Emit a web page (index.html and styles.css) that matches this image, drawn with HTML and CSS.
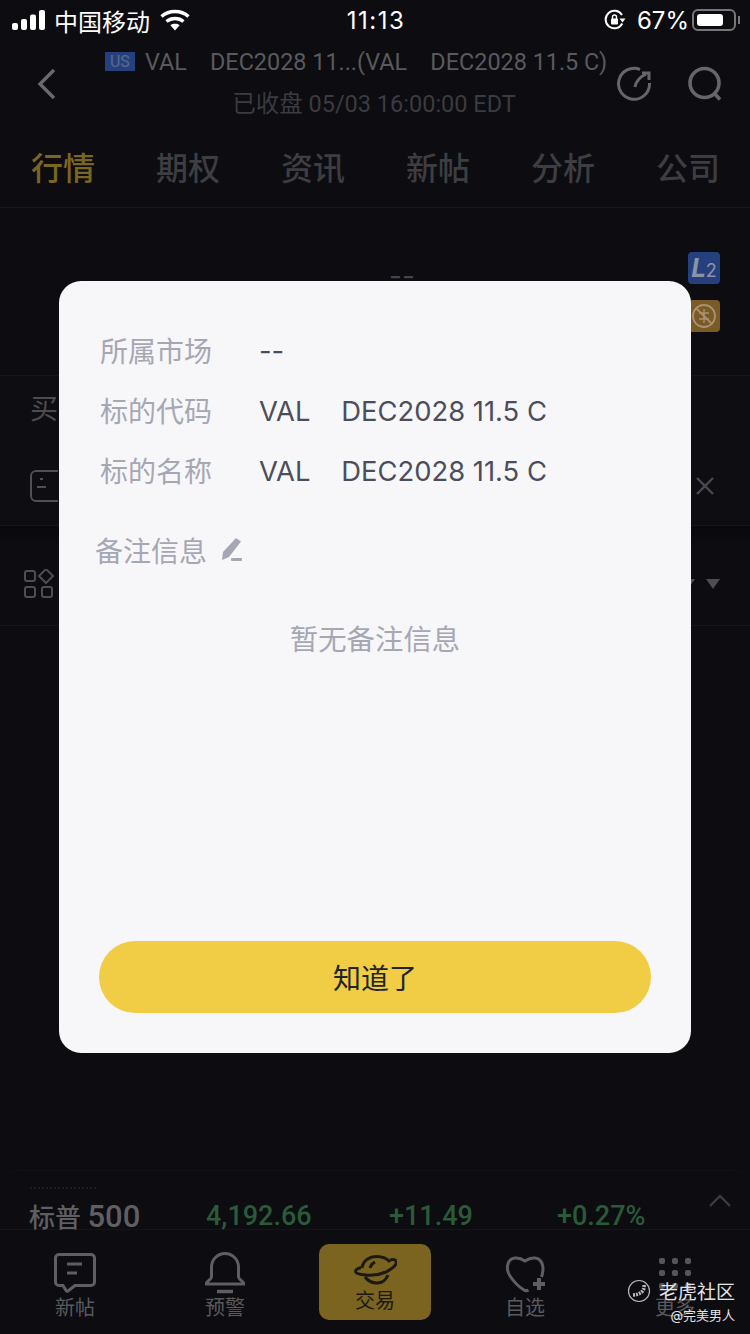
FILE: index.html
```html
<!DOCTYPE html>
<html lang="zh-CN">
<head>
    <meta charset="UTF-8">
    <meta name="viewport" content="width=device-width, initial-scale=1.0">
    <title>VAL DEC2028 11.5 C</title>
    <link rel="stylesheet" href="styles.css">
</head>
<body>
    <div class="page">
        <div class="status">
            <div class="status-left">
                <svg class="signal" width="34" height="20" viewBox="0 0 34 20" fill="#fff">
                    <rect x="0" y="13" width="6" height="7" rx="2"/>
                    <rect x="9" y="9" width="6" height="11" rx="2"/>
                    <rect x="18" y="4.5" width="6" height="15.5" rx="2"/>
                    <rect x="27" y="0" width="6" height="20" rx="2"/>
                </svg>
                <span class="carrier">中国移动</span>
                <svg width="30" height="22" viewBox="0 0 30 22" fill="none" stroke="#fff" stroke-width="3.4">
                    <path d="M1.5 7.5C9 .8 21 .8 28.5 7.5"/>
                    <path d="M6.5 12.5c4.800-4 12.200-4 17 0"/>
                    <path d="M15 21.500l-4.600-5.300c2.700-1.800 6.500-1.800 9.200 0z" fill="#fff" stroke="none"/>
                </svg>
            </div>
            <div class="status-time">11:13</div>
            <div class="status-right">
                <svg width="22" height="22" viewBox="0 0 22 22" fill="none" stroke="#fff" stroke-width="2">
                    <path d="M18.300 14.500A8.800 8.800 0 1 1 18 6"/>
                    <path d="M15.500 9.500h6l-3 4z" fill="#fff" stroke="none"/>
                    <rect x="7" y="9.500" width="7" height="6" rx="1" fill="#fff" stroke="none"/>
                    <path d="M8.500 10V8a2 2 0 0 1 4 0v2" stroke-width="1.400"/>
                </svg>
                <span class="battery-pct">67%</span>
                <div class="battery"><div class="battery-fill"></div></div>
                <div class="battery-cap"></div>
            </div>
        </div>

        <div class="header">
            <svg class="back" width="22" height="32" viewBox="0 0 22 32" fill="none" stroke="#6a6a6e" stroke-width="3.400">
                <path d="M18 2L4 16l14 14"/>
            </svg>
            <div class="title-wrap">
                <div class="title"><span class="us-tag">US</span>VAL&nbsp;&nbsp;&nbsp;&nbsp;DEC2028 11...(VAL&nbsp;&nbsp;&nbsp;&nbsp;DEC2028 11.5 C)</div>
                <div class="subtitle">已收盘 05/03 16:00:00 EDT</div>
            </div>
            <div class="header-icons">
                <svg width="36" height="36" viewBox="0 0 36 36" fill="none" stroke="#66666a" stroke-width="3">
                    <path d="M24 3.500A15.500 15.500 0 1 0 33.500 17"/>
                    <path d="M19 21c1-6 5-10 11-13"/>
                    <path d="M26 7h7v7"/>
                </svg>
                <svg width="36" height="36" viewBox="0 0 36 36" fill="none" stroke="#66666a" stroke-width="3.600">
                    <circle cx="17.500" cy="17" r="14.500"/>
                    <path d="M27 27l6 6.500"/>
                </svg>
            </div>
        </div>

        <div class="tabs">
            <span class="tab tab-active">行情</span>
            <span class="tab">期权</span>
            <span class="tab">资讯</span>
            <span class="tab">新帖</span>
            <span class="tab">分析</span>
            <span class="tab">公司</span>
        </div>

        <div class="quote">
            <div class="quote-price">--</div>
            <div class="quote-badges">
                <div class="badge badge-blue"><i>L</i><span>2</span></div>
                <div class="badge badge-orange">
                    <svg width="26" height="26" viewBox="0 0 26 26" fill="none" stroke="#a99273" stroke-width="1.800">
                        <circle cx="13" cy="13" r="11"/>
                        <path d="M5 5l16 16"/>
                        <path d="M8 10h10M8 16h10M13 6v14" stroke-width="1.400"/>
                    </svg>
                </div>
            </div>
        </div>

        <div class="buy-row">
            <div class="buy-label">买</div>
            <div class="notice">
                <svg width="28" height="32" viewBox="0 0 28 32" fill="none" stroke="#505054" stroke-width="2">
                    <rect x="1" y="1" width="40" height="30" rx="5"/>
                    <path d="M10 9h3M7 17h9"/>
                </svg>
                <svg class="close" width="18" height="18" viewBox="0 0 18 18" stroke="#4a4a52" stroke-width="2.400">
                    <path d="M1 1l16 16M17 1L1 17"/>
                </svg>
            </div>
        </div>

        <div class="tool-row">
            <svg width="30" height="30" viewBox="0 0 30 30" fill="none" stroke="#4e4e52" stroke-width="2">
                <rect x="1" y="2" width="10" height="10" rx="2"/>
                <path d="M23 1l7 7-7 7-7-7z" transform="translate(-1 -1)"/>
                <rect x="1" y="18" width="10" height="10" rx="2"/>
                <rect x="18" y="18" width="10" height="10" rx="2"/>
            </svg>
            <div class="carets">
                <span class="caret"></span>
                <span class="caret"></span>
            </div>
        </div>

        <div class="spacer"></div>

        <div class="market">
            <div class="market-dots"></div>
            <div class="market-line">
                <span class="market-name">标普 <span class="market-idx">500</span></span>
                <span class="market-num num-price">4,192.66</span>
                <span class="market-num num-change">+11.49</span>
                <span class="market-num num-pct">+0.27%</span>
            </div>
            <svg class="market-up" width="24" height="14" viewBox="0 0 24 14" fill="none" stroke="#3c3c40" stroke-width="2.400">
                <path d="M2 12L12 2l10 10"/>
            </svg>
        </div>

        <div class="nav">
            <div class="nav-item">
                <svg width="44" height="44" viewBox="0 0 44 44" fill="none" stroke="#5f5f63" stroke-width="3">
                    <path d="M6 2.500h32a3.500 3.500 0 0 1 3.500 3.500v24a3.500 3.500 0 0 1-3.500 3.500H22l-7 5.500c-.8.6-1.600.4-2-.5L10 33.500H6A3.500 3.500 0 0 1 2.500 30V6A3.500 3.500 0 0 1 6 2.500z"/>
                    <path d="M14 12h15M14 21h10"/>
                </svg>
                <span>新帖</span>
            </div>
            <div class="nav-item">
                <svg width="44" height="44" viewBox="0 0 44 44" fill="none" stroke="#5f5f63" stroke-width="3">
                    <path d="M8.500 15a13.500 13.500 0 0 1 27 0v10c0 2 4 4 5 6v1H3.500v-1c1-2 5-4 5-6z"/>
                    <path d="M14 39.500h16" stroke-width="3.500"/>
                </svg>
                <span>预警</span>
            </div>
            <div class="nav-item nav-trade">
                <svg width="44" height="30" viewBox="0 0 44 30" fill="none" stroke="#1c1a10" stroke-width="3">
                    <path d="M9 13C10 5 17 1.500 24 1.500c5 0 10 2 13 5.500"/>
                    <path d="M17 13c.5-2.500 2-4.500 5-6"/>
                    <path d="M37 5c4-1 6.500 0 6.500 2 0 3-5 7-10.500 10-6 2.500-14 4-21 3-5-.5-9.500-1.500-9.500-3.500 0-1.500 2-3 5.500-4"/>
                    <path d="M12 22c3 4 7 6 12 6 5 0 9-3 11-8"/>
                </svg>
                <span>交易</span>
            </div>
            <div class="nav-item">
                <svg width="44" height="44" viewBox="0 0 44 44" fill="none" stroke="#5f5f63" stroke-width="3">
                    <path d="M38.500 25C41 18 41 7 32 6c-4-.5-7 1-10 3-3-2-6-3.500-10-3C3 7 3 18 7 24c4 6 9 11 14 14 1.500 1 3 1 4.500 0"/>
                    <path d="M36 26v12M30 32h12" stroke-width="4"/>
                </svg>
                <span>自选</span>
            </div>
            <div class="nav-item">
                <svg width="44" height="44" viewBox="0 0 44 44" fill="#55555a">
                    <rect x="6" y="6" width="6" height="6" rx="2"/><rect x="19" y="6" width="6" height="6" rx="2"/><rect x="32" y="6" width="6" height="6" rx="2"/>
                    <rect x="6" y="18" width="6" height="6" rx="2"/><rect x="19" y="18" width="6" height="6" rx="2"/><rect x="32" y="18" width="6" height="6" rx="2"/>
                    <rect x="6" y="31" width="6" height="6" rx="2"/><rect x="19" y="31" width="6" height="6" rx="2"/><rect x="32" y="31" width="6" height="6" rx="2"/>
                </svg>
                <span>更多</span>
            </div>
        </div>

        <div class="watermark">
            <div class="wm-top">
                <svg width="24" height="24" viewBox="0 0 24 24" fill="none" stroke="#b8b8ba" stroke-width="1.200">
                    <circle cx="12" cy="12" r="10.500"/>
                    <path d="M17 6c1 6-4 10-12 10" stroke-width="3.600" stroke-dasharray="2 1"/>
                </svg>
                <span>老虎社区</span>
            </div>
            <div class="wm-user">@完美男人</div>
        </div>

        <div class="modal">
            <div class="info-list">
                <div class="info-row"><span class="info-label">所属市场</span><span class="info-val">--</span></div>
                <div class="info-row"><span class="info-label">标的代码</span><span class="info-val">VAL&nbsp;&nbsp;&nbsp;&nbsp;DEC2028 11.5 C</span></div>
                <div class="info-row"><span class="info-label">标的名称</span><span class="info-val">VAL&nbsp;&nbsp;&nbsp;&nbsp;DEC2028 11.5 C</span></div>
            </div>
            <div class="note-head">
                <span>备注信息</span>
                <svg width="24" height="26" viewBox="0 0 24 26" fill="#a6a7b3">
                    <path d="M17 1l5 3.500L10 20l-7 3 1-8z"/>
                    <rect x="12" y="21" width="11" height="3" rx="1"/>
                </svg>
            </div>
            <div class="note-empty">暂无备注信息</div>
            <button class="ok-btn">知道了</button>
        </div>
    </div>
</body>
</html>
```

FILE: styles.css
```css
*{
    padding: 0;
    margin: 0;
    box-sizing: border-box;
}

body{
    background-color: #0c0c11;
    font-family: "Inter", "Noto Sans CJK SC", sans-serif;
}
.page{
    position: relative;
    width: 750px;
    height: 1334px;
    overflow: hidden;
    display: flex;
    flex-direction: column;
    background-color: #0c0c11;
}

/* status bar */
.status{
    height: 40px;
    padding: 0 10px 0 12px;
    display: flex;
    justify-content: space-between;
    align-items: center;
    color: #fff;
}
.status-left{
    width: 260px;
    display: flex;
    align-items: center;
    gap: 8px;
}
.carrier{
    font-size: 24px;
    margin-right: 2px;
}
.status-time{
    font-size: 24px;
    letter-spacing: 1.5px;
}
.status-right{
    width: 260px;
    display: flex;
    justify-content: flex-end;
    align-items: center;
    font-size: 24px;
}
.battery-pct{
    margin: 0 3px 0 11px;
}
.battery{
    width: 44px;
    height: 22px;
    padding: 3px;
    border: 2px solid #77777a;
    border-radius: 6px;
}
.battery-fill{
    width: 26px;
    height: 100%;
    background-color: #fff;
    border-radius: 3px;
}
.battery-cap{
    width: 2px;
    height: 8px;
    margin-left: 2px;
    background-color: #77777a;
}

/* header */
.header{
    height: 84px;
    padding: 4px 27px 0 36px;
    display: flex;
    align-items: center;
}
.back{
    flex-shrink: 0;
}
.title-wrap{
    flex: 1;
    min-width: 0;
    display: flex;
    flex-direction: column;
    align-items: center;
    gap: 9px;
    margin-top: -2px;
    padding-left: 74px;
}
.title{
    margin-right: 36px;
    color: #5a5a5e;
    font-size: 23.4px;
    font-family: "Roboto", "Noto Sans CJK SC", sans-serif;
    white-space: nowrap;
    display: flex;
    align-items: center;
}
.us-tag{
    width: 30px;
    height: 19px;
    margin-right: 10px;
    background-color: #25407e;
    color: #5c6a8a;
    font-size: 16px;
    line-height: 19px;
    text-align: center;
}
.subtitle{
    color: #3b3b40;
    font-size: 23.5px;
    font-family: "Roboto", "Noto Sans CJK SC", sans-serif;
}
.header-icons{
    display: flex;
    gap: 35px;
    flex-shrink: 0;
}

/* tabs */
.tabs{
    height: 84px;
    padding: 0 30px 0 31px;
    display: flex;
    justify-content: space-between;
    align-items: center;
    border-bottom: 1px solid #17171c;
    font-size: 32px;
    font-weight: 500;
    color: #3d3d42;
}
.tab-active{
    color: #7b6621;
}

/* quote block */
.quote{
    height: 168px;
    padding: 46px 30px 0;
    display: flex;
    justify-content: space-between;
    border-bottom: 1px solid #15151a;
}
.quote-price{
    width: 100%;
    padding-left: 86px;
    text-align: center;
    color: #44444a;
    font-size: 28px;
    line-height: 44px;
}
.quote-badges{
    margin-top: -2px;
    display: flex;
    flex-direction: column;
    gap: 16px;
}
.badge{
    width: 32px;
    height: 32px;
    border-radius: 4px;
    display: flex;
    justify-content: center;
    align-items: center;
}
.badge-blue{
    background-color: #25407e;
    color: #8c93a6;
    font-size: 26px;
    font-weight: 700;
    line-height: 1;
}
.badge-blue span{
    font-size: 18px;
    font-weight: 400;
    margin-top: 6px;
}
.badge-orange{
    background-color: #7a5a25;
}

/* rows behind the dialog */
.buy-row{
    height: 150px;
    padding: 14px 30px 0;
    border-bottom: 1px solid #15151a;
    background-color: #0d0d12;
}
.buy-label{
    color: #4c4c50;
    font-size: 28px;
    line-height: 38px;
}
.notice{
    margin-top: 42px;
    display: flex;
    justify-content: space-between;
    align-items: center;
    padding-right: 6px;
}
.tool-row{
    height: 100px;
    padding: 16px 30px 0 24px;
    display: flex;
    justify-content: space-between;
    align-items: center;
    border-bottom: 1px solid #15151a;
    background: linear-gradient(#09090d, #0c0c11 24px);
}
.carets{
    display: flex;
    gap: 11px;
}
.caret{
    border-left: 7px solid transparent;
    border-right: 7px solid transparent;
    border-top: 10px solid #4e4e52;
}
.spacer{
    flex: 1;
}

/* market ticker */
.market{
    position: relative;
    height: 60px;
    padding: 16px 30px 0;
    border-top: 1px solid #121217;
    border-radius: 18px 18px 0 0;
    border-bottom: 1px solid #15151a;
}
.market-dots{
    width: 66px;
    height: 2px;
    border-top: 2px dotted #1e1e22;
}
.market-line{
    height: 24px;
    margin-top: 15px;
    display: flex;
    align-items: center;
    font-family: "Roboto", sans-serif;
    font-size: 27px;
    font-weight: 500;
}
.market-name{
    width: 177px;
    margin-left: -1px;
    color: #5f5f63;
    font-family: "Roboto", "Noto Sans CJK SC", sans-serif;
    font-size: 26px;
}
.market-idx{
    font-size: 31px;
}
.market-num{
    color: #2a5a3a;
}
.num-price{
    width: 183px;
}
.num-change{
    width: 168px;
}
.market-up{
    position: absolute;
    right: 18px;
    top: 23px;
}

/* bottom nav */
.nav{
    height: 104px;
    padding-top: 14px;
    display: grid;
    grid-template-columns: repeat(5, 1fr);
    justify-items: center;
}
.nav-item{
    width: 112px;
    height: 76px;
    padding-top: 8px;
    display: flex;
    flex-direction: column;
    align-items: center;
    color: #5a5a5e;
    font-size: 20px;
    line-height: 24px;
}
.nav-trade{
    padding-top: 11px;
    background-color: #7a6420;
    border-radius: 10px;
    color: #1c1a10;
}
.nav-trade svg{
    margin-bottom: 4px;
}

/* watermark */
.watermark{
    position: absolute;
    right: 15px;
    bottom: 10px;
    color: #e4e4e6;
    text-align: right;
}
.wm-top{
    display: flex;
    align-items: center;
    gap: 8px;
    font-size: 19px;
}
.wm-user{
    margin-top: 1px;
    font-size: 13px;
}

/* dialog */
.modal{
    position: absolute;
    left: 59px;
    top: 281px;
    width: 632px;
    height: 772px;
    padding: 49px 40px 40px;
    display: flex;
    flex-direction: column;
    background-color: #f7f7fa;
    border-radius: 22px;
}
.info-list{
    display: flex;
    flex-direction: column;
    gap: 20px;
}
.info-row{
    height: 40px;
    display: flex;
    align-items: center;
    font-size: 28px;
}
.info-label{
    width: 161px;
    padding-left: 1px;
    color: #a6a7b3;
}
.info-val{
    margin-left: -1px;
    padding-top: 2px;
    color: #4c4d5a;
    font-size: 27.4px;
}
.note-head{
    margin: 40px 0 0 -4px;
    height: 40px;
    display: flex;
    align-items: center;
    gap: 12px;
    color: #a6a7b3;
    font-size: 28px;
}
.note-empty{
    flex: 1;
    margin-top: 47px;
    text-align: center;
    color: #a6a7b3;
    font-size: 28.4px;
}
.ok-btn{
    width: 100%;
    height: 72px;
    border: none;
    border-radius: 36px;
    background-color: #f0cd44;
    color: #23232b;
    font-family: "Noto Sans CJK SC", sans-serif;
    font-size: 28px;
}
```
